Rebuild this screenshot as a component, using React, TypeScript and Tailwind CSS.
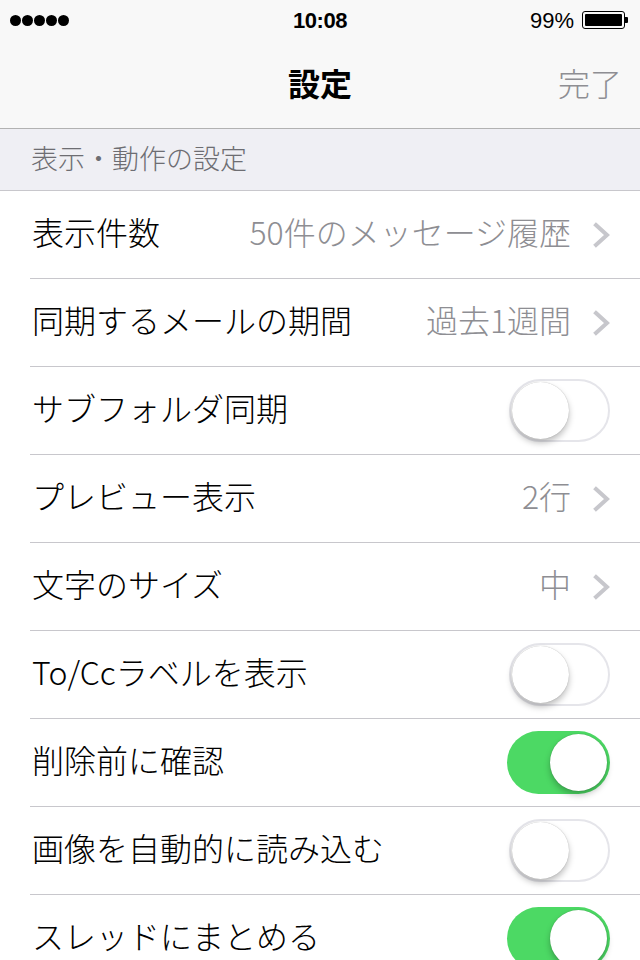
import React from 'react';

type Row =
  | { label: string; kind: 'value'; value: string }
  | { label: string; kind: 'toggle'; on: boolean };

// 設定項目の一覧
const rows: Row[] = [
  { label: '表示件数', kind: 'value', value: '50件のメッセージ履歴' },
  { label: '同期するメールの期間', kind: 'value', value: '過去1週間' },
  { label: 'サブフォルダ同期', kind: 'toggle', on: false },
  { label: 'プレビュー表示', kind: 'value', value: '2行' },
  { label: '文字のサイズ', kind: 'value', value: '中' },
  { label: 'To/Ccラベルを表示', kind: 'toggle', on: false },
  { label: '削除前に確認', kind: 'toggle', on: true },
  { label: '画像を自動的に読み込む', kind: 'toggle', on: false },
  { label: 'スレッドにまとめる', kind: 'toggle', on: true },
];

const Chevron = () => (
  <svg width="18" height="26" viewBox="0 0 18 26" className="ml-[22px] mr-[29px]">
    <polyline points="3,3 14,13 3,23" fill="none" stroke="#c7c7cc" strokeWidth="4" strokeLinecap="square" />
  </svg>
);

const Toggle = ({ on }: { on: boolean }) => (
  <div
    className={
      on
        ? 'mr-[30px] flex h-[63px] w-[103px] items-center justify-end rounded-full bg-[#4cd964] pr-[3px]'
        : 'mr-[30px] flex h-[63px] w-[101px] items-center justify-start rounded-full border-[2px] border-[#e5e5ea] bg-white pl-[1px]'
    }
  >
    <div className="h-[57px] w-[57px] rounded-full bg-white shadow-[0_4px_6px_rgba(0,0,0,0.25),0_0_1px_rgba(0,0,0,0.3)]" />
  </div>
);

const App = () => {
  return (
    <div className="h-[960px] w-[640px] overflow-hidden bg-white font-['Noto_Sans_CJK_JP',sans-serif] text-black">
      {/* ステータスバー */}
      <div className="flex h-[40px] items-center bg-[#f8f8f8] px-[10px] font-['Liberation_Sans',sans-serif]">
        <div className="flex w-[200px] gap-[1px]">
          {[0, 1, 2, 3, 4].map((i) => (
            <div key={i} className="h-[11px] w-[11px] rounded-full bg-black" />
          ))}
        </div>
        <div className="flex-1 text-center text-[22px] font-semibold tracking-[-0.5px]">10:08</div>
        <div className="flex w-[200px] items-center justify-end gap-[8px] pr-[2px]">
          <span className="text-[22px]">99%</span>
          <div className="flex items-center">
            <div className="h-[18px] w-[43px] rounded-[3px] border border-black p-[2px]">
              <div className="h-full w-full rounded-[1px] bg-black" />
            </div>
            <div className="h-[6px] w-[3px] rounded-r-[1px] bg-black" />
          </div>
        </div>
      </div>

      {/* ナビゲーションバー */}
      <div className="relative flex h-[89px] items-center justify-center border-b border-[#b2b2b2] bg-[#f8f8f8] pb-[4px]">
        <span className="text-[32px] font-bold">設定</span>
        <span className="absolute right-[18px] text-[32px] font-light text-[#8e8e93]">完了</span>
      </div>

      {/* セクションヘッダー */}
      <div className="flex h-[62px] items-center border-b border-[#c8c7cc] bg-[#efeff4] pb-[3px] pl-[31px] text-[27px] font-light text-[#6d6d72]">
        表示・動作の設定
      </div>

      {/* 設定行 */}
      {rows.map((row) => (
        <div key={row.label} className="ml-[30px] flex h-[88px] items-center border-b border-[#c8c7cc]">
          <span className="flex-1 pb-[8px] pl-[2px] text-[32px] font-light">{row.label}</span>
          {row.kind === 'value' ? (
            <>
              <span className="pb-[8px] text-[32px] font-light text-[#8e8e93]">{row.value}</span>
              <Chevron />
            </>
          ) : (
            <Toggle on={row.on} />
          )}
        </div>
      ))}
    </div>
  );
};

export default App;
